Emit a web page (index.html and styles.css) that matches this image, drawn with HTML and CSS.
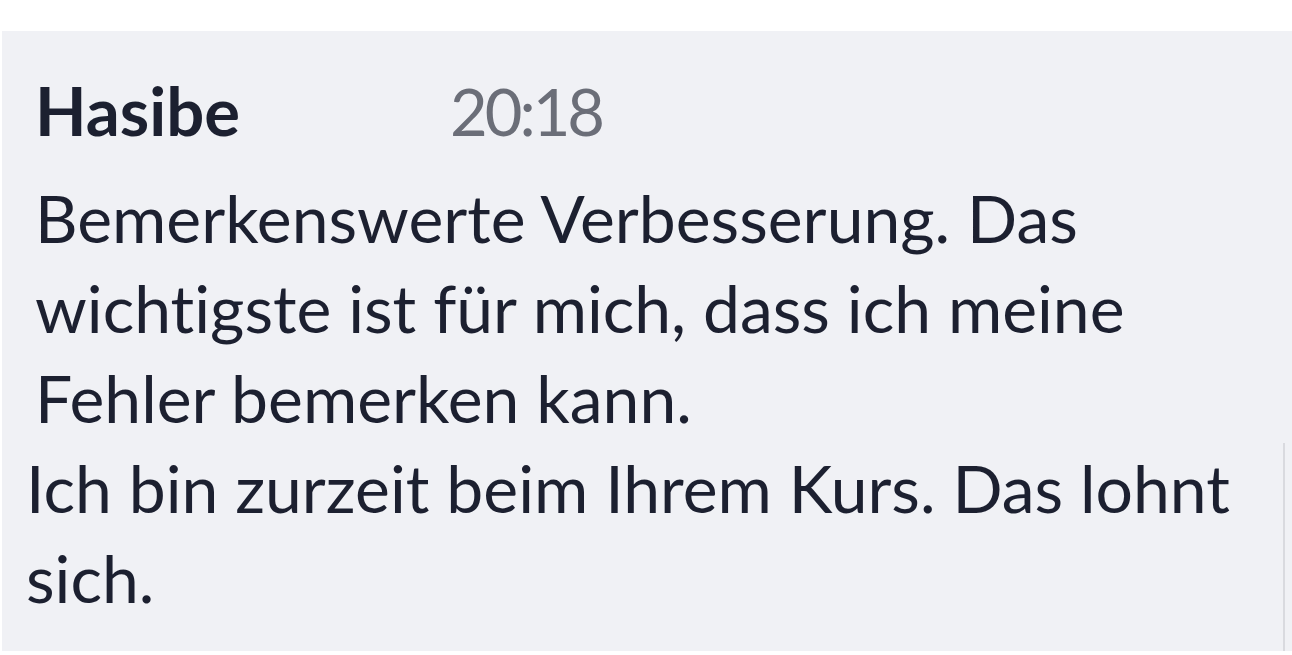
FILE: index.html
```html
<!DOCTYPE html>
<html lang="de">
<head>
<meta charset="utf-8">
<link rel="stylesheet" href="styles.css">
</head>
<body>
<div class="message">
  <div class="meta">
    <span class="author">Hasibe</span>
    <span class="time">20:18</span>
  </div>
  <p class="text">Bemerkenswerte Verbesserung. Das wichtigste ist für mich, dass ich meine Fehler bemerken kann.</p>
  <p class="reply">Ich bin zurzeit beim Ihrem Kurs. Das lohnt sich.</p>
</div>
</body>
</html>
```
FILE: styles.css
```css
html, body {
  margin: 0;
  padding: 0;
  background: #ffffff;
}
body {
  font-family: Lato, "Noto Sans", sans-serif;
  color: #1c2030;
  font-variant-ligatures: none;
}
.message {
  margin: 31px 0 0 2px;
  height: 620px;
  box-sizing: border-box;
  background: #f0f1f5;
  padding: 34px 0 0 0;
  display: flex;
  flex-direction: column;
}
.meta {
  display: flex;
  align-items: baseline;
  padding-left: 33px;
  font-size: 67px;
  line-height: 90px;
}
.author {
  font-weight: 700;
  width: 415px;
}
.time {
  color: #6b6e78;
  letter-spacing: -3px;
  font-size: 65px;
}
.text {
  margin: 17px 0 0 0;
  padding-left: 33px;
  width: 1140px;
  font-size: 66px;
  line-height: 90px;
}
.reply {
  flex: 1;
  margin: 0;
  padding-left: 24px;
  width: 1257px;
  border-right: 2px solid #d9dadf;
  font-size: 66px;
  line-height: 90px;
}
```
